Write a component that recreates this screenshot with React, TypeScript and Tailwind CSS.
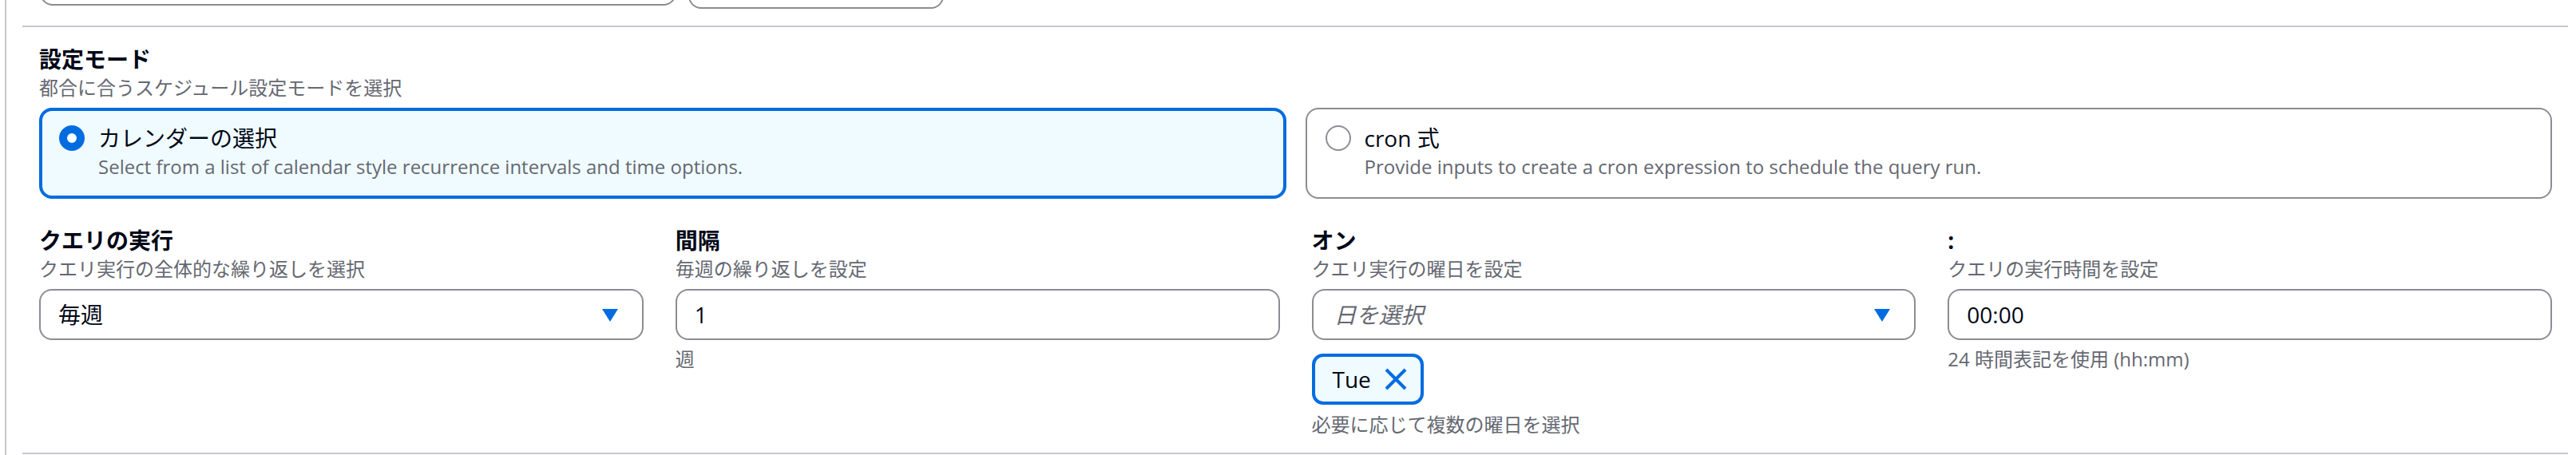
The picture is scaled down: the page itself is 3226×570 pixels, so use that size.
import React from "react";

function Caret() {
  return (
    <svg width="32" height="32" viewBox="0 0 16 16" className="shrink-0">
      <path d="M3 4.5h10L8 12.5z" fill="#006ce0" />
    </svg>
  );
}

function Radio({ checked }: { checked: boolean }) {
  return checked ? (
    <span className="mt-[4px] h-[32px] w-[32px] shrink-0 rounded-full border-[10px] border-[#006ce0] bg-white" />
  ) : (
    <span className="mt-[4px] h-[32px] w-[32px] shrink-0 rounded-full border-2 border-[#8c8c94] bg-white" />
  );
}

function Field({
  label,
  desc,
  children,
}: {
  label: string;
  desc: string;
  children: React.ReactNode;
}) {
  return (
    <div className="flex min-w-0 flex-col">
      <div className="text-[28px] font-bold leading-[40px] text-[#000716]">{label}</div>
      <div className="text-[24px] leading-[32px] text-[#656871]">{desc}</div>
      <div className="mt-[9px] flex flex-col">{children}</div>
    </div>
  );
}

function Helper({ children }: { children: React.ReactNode }) {
  return <div className="mt-[8px] text-[24px] leading-[32px] text-[#656871]">{children}</div>;
}

export default function App() {
  return (
    <div className="min-h-[570px] w-full bg-white pl-[6px] font-['Open_Sans','Noto_Sans_CJK_JP',sans-serif] text-[#000716]">
      <div className="min-h-[570px] border-l-2 border-[#c6c6cd] pl-[20px] pr-[10px]">
        {/* tail of the fields above */}
        <div className="flex h-[32px] items-end gap-[15px] pl-[22px]">
          <div className="mb-[25px] h-[64px] w-[797px] shrink-0 rounded-[16px] border-2 border-[#8c8c94]" />
          <div className="mb-[21px] h-[64px] w-[320px] shrink-0 rounded-[16px] border-2 border-[#8c8c94]" />
        </div>

        <div className="border-y-2 border-[#c6c6cd] pb-[19px] pl-[21px] pr-[20px] pt-[20px]">
          <div className="text-[28px] font-bold leading-[40px]">設定モード</div>
          <div className="text-[24px] leading-[32px] text-[#656871]">
            都合に合うスケジュール設定モードを選択
          </div>

          {/* mode tiles */}
          <div className="mt-[9px] grid grid-cols-2 gap-[24px]">
            <div className="flex items-start gap-[17px] rounded-[16px] border-[4px] border-[#006ce0] bg-[#f0fbff] pb-[20px] pl-[21px] pr-[21px] pt-[14px]">
              <Radio checked />
              <div className="flex flex-col">
                <div className="text-[28px] leading-[40px]">カレンダーの選択</div>
                <div className="text-[24px] leading-[32px] text-[#656871]">
                  Select from a list of calendar style recurrence intervals and time options.
                </div>
              </div>
            </div>
            <div className="flex items-start gap-[17px] rounded-[16px] border-2 border-[#8c8c94] bg-white pb-[22px] pl-[23px] pr-[23px] pt-[16px]">
              <Radio checked={false} />
              <div className="flex flex-col">
                <div className="text-[28px] leading-[40px]">cron 式</div>
                <div className="text-[24px] leading-[32px] text-[#656871]">
                  Provide inputs to create a cron expression to schedule the query run.
                </div>
              </div>
            </div>
          </div>

          {/* calendar fields */}
          <div className="mt-[32px] grid grid-cols-4 gap-x-[40px]">
            <Field label="クエリの実行" desc="クエリ実行の全体的な繰り返しを選択">
              <div className="flex h-[64px] items-center justify-between rounded-[16px] border-2 border-[#8c8c94] bg-white pl-[22px] pr-[24px]">
                <span className="text-[28px] leading-[40px]">毎週</span>
                <Caret />
              </div>
            </Field>

            <Field label="間隔" desc="毎週の繰り返しを設定">
              <div className="flex h-[64px] items-center rounded-[16px] border-2 border-[#8c8c94] bg-white pl-[22px] pr-[24px]">
                <span className="text-[28px] leading-[40px]">1</span>
              </div>
              <Helper>週</Helper>
            </Field>

            <Field label="オン" desc="クエリ実行の曜日を設定">
              <div className="flex h-[64px] items-center justify-between rounded-[16px] border-2 border-[#8c8c94] bg-white pl-[26px] pr-[24px]">
                <span className="text-[28px] italic leading-[40px] text-[#656871]">日を選択</span>
                <Caret />
              </div>
              <div className="mt-[17px] flex">
                <div className="flex h-[64px] items-center rounded-[14px] border-[4px] border-[#006ce0] bg-[#f0fbff] pl-[22px] pr-[15px]">
                  <span className="text-[28px] leading-[40px]">Tue</span>
                  <svg width="32" height="32" viewBox="0 0 16 16" className="ml-[15px] shrink-0">
                    <path d="m2 2 12 12M14 2 2 14" stroke="#006ce0" strokeWidth="2" fill="none" />
                  </svg>
                </div>
              </div>
              <div className="mt-[9px] text-[24px] leading-[32px] text-[#656871]">
                必要に応じて複数の曜日を選択
              </div>
            </Field>

            <Field label=":" desc="クエリの実行時間を設定">
              <div className="flex h-[64px] items-center rounded-[16px] border-2 border-[#8c8c94] bg-white pl-[22px] pr-[24px]">
                <span className="text-[28px] leading-[40px]">00:00</span>
              </div>
              <Helper>24 時間表記を使用 (hh:mm)</Helper>
            </Field>
          </div>
        </div>
      </div>
    </div>
  );
}
